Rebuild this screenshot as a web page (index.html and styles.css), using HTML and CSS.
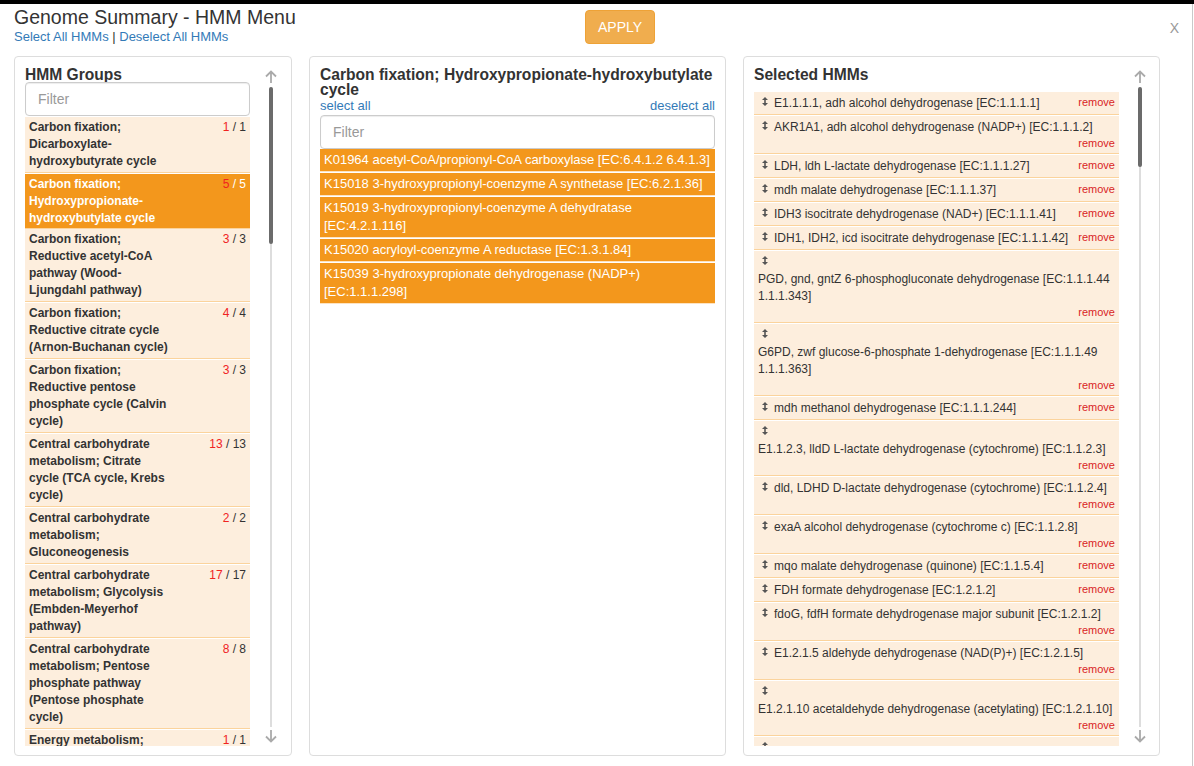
FILE: index.html
```html
<!DOCTYPE html>
<html lang="en">
<head>
<meta charset="utf-8">
<title>Genome Summary - HMM Menu</title>
<link rel="stylesheet" href="styles.css">
</head>
<body>
<div class="modal">
  <header class="modal-head">
    <div class="title-block">
      <h1 class="title">Genome Summary - HMM Menu</h1>
      <div class="bulk-links"><a href="#">Select All HMMs</a> | <a href="#">Deselect All HMMs</a></div>
    </div>
    <button class="btn-apply" type="button">APPLY</button>
    <span class="close">X</span>
  </header>

  <div class="columns">
    <section class="panel panel-groups">
      <div class="panel-main">
        <h2 class="panel-title">HMM Groups</h2>
        <input class="filter" type="text" placeholder="Filter">
        <div class="group-list">
          <div class="group">
            <div class="group-name">Carbon fixation; Dicarboxylate-hydroxybutyrate cycle</div>
            <div class="group-count"><span class="count-hit">1</span> / 1</div>
          </div>
          <div class="group is-active">
            <div class="group-name">Carbon fixation; Hydroxypropionate-hydroxybutylate cycle</div>
            <div class="group-count"><span class="count-hit">5</span> / 5</div>
          </div>
          <div class="group">
            <div class="group-name">Carbon fixation; Reductive acetyl-CoA pathway (Wood-Ljungdahl pathway)</div>
            <div class="group-count"><span class="count-hit">3</span> / 3</div>
          </div>
          <div class="group">
            <div class="group-name">Carbon fixation; Reductive citrate cycle (Arnon-Buchanan cycle)</div>
            <div class="group-count"><span class="count-hit">4</span> / 4</div>
          </div>
          <div class="group">
            <div class="group-name">Carbon fixation; Reductive pentose phosphate cycle (Calvin cycle)</div>
            <div class="group-count"><span class="count-hit">3</span> / 3</div>
          </div>
          <div class="group">
            <div class="group-name">Central carbohydrate metabolism; Citrate cycle (TCA cycle, Krebs cycle)</div>
            <div class="group-count"><span class="count-hit">13</span> / 13</div>
          </div>
          <div class="group">
            <div class="group-name">Central carbohydrate metabolism; Gluconeogenesis</div>
            <div class="group-count"><span class="count-hit">2</span> / 2</div>
          </div>
          <div class="group">
            <div class="group-name">Central carbohydrate metabolism; Glycolysis (Embden-Meyerhof pathway)</div>
            <div class="group-count"><span class="count-hit">17</span> / 17</div>
          </div>
          <div class="group">
            <div class="group-name">Central carbohydrate metabolism; Pentose phosphate pathway (Pentose phosphate cycle)</div>
            <div class="group-count"><span class="count-hit">8</span> / 8</div>
          </div>
          <div class="group">
            <div class="group-name">Energy metabolism; Nitrogen metabolism</div>
            <div class="group-count"><span class="count-hit">1</span> / 1</div>
          </div>
        </div>
      </div>
      <div class="scroll">
        <svg class="scroll-arrow" width="12" height="13" viewBox="0 0 12 13"><path d="M6 1.5V13M1 6.5L6 1.5L11 6.5" fill="none" stroke="#aaa" stroke-width="1.8"/></svg>
        <div class="scroll-track"><div class="scroll-thumb" style="height:157px"></div></div>
        <svg class="scroll-arrow" width="12" height="13" viewBox="0 0 12 13"><path d="M6 0V11.5M1 6.5L6 11.5L11 6.5" fill="none" stroke="#aaa" stroke-width="1.8"/></svg>
      </div>
    </section>

    <section class="panel panel-hmms">
      <div class="panel-main">
        <h2 class="panel-title">Carbon fixation; Hydroxypropionate-hydroxybutylate cycle</h2>
        <div class="select-links"><a href="#">select all</a><a href="#">deselect all</a></div>
        <input class="filter" type="text" placeholder="Filter">
        <div class="hmm-list">
          <div class="hmm">K01964 acetyl-CoA/propionyl-CoA carboxylase [EC:6.4.1.2 6.4.1.3]</div>
          <div class="hmm">K15018 3-hydroxypropionyl-coenzyme A synthetase [EC:6.2.1.36]</div>
          <div class="hmm">K15019 3-hydroxypropionyl-coenzyme A dehydratase [EC:4.2.1.116]</div>
          <div class="hmm">K15020 acryloyl-coenzyme A reductase [EC:1.3.1.84]</div>
          <div class="hmm">K15039 3-hydroxypropionate dehydrogenase (NADP+) [EC:1.1.1.298]</div>
        </div>
      </div>
    </section>

    <section class="panel panel-selected">
      <div class="panel-main">
        <h2 class="panel-title selected-title">Selected HMMs</h2>
        <div class="sel-list">
          <div class="sel-item"><a class="remove" href="#">remove</a><span class="grip"><svg width="6" height="9" viewBox="0 0 6 9"><path d="M3 0L6 3H3.8V6H6L3 9L0 6H2.2V3H0Z" fill="#555"/></svg></span><span class="sel-name">E1.1.1.1, adh alcohol dehydrogenase [EC:1.1.1.1]</span></div>
          <div class="sel-item"><span class="grip"><svg width="6" height="9" viewBox="0 0 6 9"><path d="M3 0L6 3H3.8V6H6L3 9L0 6H2.2V3H0Z" fill="#555"/></svg></span><span class="sel-name">AKR1A1, adh alcohol dehydrogenase (NADP+) [EC:1.1.1.2]</span><div class="remove-row"><a class="remove" href="#">remove</a></div></div>
          <div class="sel-item"><a class="remove" href="#">remove</a><span class="grip"><svg width="6" height="9" viewBox="0 0 6 9"><path d="M3 0L6 3H3.8V6H6L3 9L0 6H2.2V3H0Z" fill="#555"/></svg></span><span class="sel-name">LDH, ldh L-lactate dehydrogenase [EC:1.1.1.27]</span></div>
          <div class="sel-item"><a class="remove" href="#">remove</a><span class="grip"><svg width="6" height="9" viewBox="0 0 6 9"><path d="M3 0L6 3H3.8V6H6L3 9L0 6H2.2V3H0Z" fill="#555"/></svg></span><span class="sel-name">mdh malate dehydrogenase [EC:1.1.1.37]</span></div>
          <div class="sel-item"><a class="remove" href="#">remove</a><span class="grip"><svg width="6" height="9" viewBox="0 0 6 9"><path d="M3 0L6 3H3.8V6H6L3 9L0 6H2.2V3H0Z" fill="#555"/></svg></span><span class="sel-name">IDH3 isocitrate dehydrogenase (NAD+) [EC:1.1.1.41]</span></div>
          <div class="sel-item"><a class="remove" href="#">remove</a><span class="grip"><svg width="6" height="9" viewBox="0 0 6 9"><path d="M3 0L6 3H3.8V6H6L3 9L0 6H2.2V3H0Z" fill="#555"/></svg></span><span class="sel-name">IDH1, IDH2, icd isocitrate dehydrogenase [EC:1.1.1.42]</span></div>
          <div class="sel-item"><span class="grip"><svg width="6" height="9" viewBox="0 0 6 9"><path d="M3 0L6 3H3.8V6H6L3 9L0 6H2.2V3H0Z" fill="#555"/></svg></span><span class="sel-name">PGD, gnd, gntZ 6-phosphogluconate dehydrogenase [EC:1.1.1.44 1.1.1.343]</span><div class="remove-row"><a class="remove" href="#">remove</a></div></div>
          <div class="sel-item"><span class="grip"><svg width="6" height="9" viewBox="0 0 6 9"><path d="M3 0L6 3H3.8V6H6L3 9L0 6H2.2V3H0Z" fill="#555"/></svg></span><span class="sel-name">G6PD, zwf glucose-6-phosphate 1-dehydrogenase [EC:1.1.1.49 1.1.1.363]</span><div class="remove-row"><a class="remove" href="#">remove</a></div></div>
          <div class="sel-item"><a class="remove" href="#">remove</a><span class="grip"><svg width="6" height="9" viewBox="0 0 6 9"><path d="M3 0L6 3H3.8V6H6L3 9L0 6H2.2V3H0Z" fill="#555"/></svg></span><span class="sel-name">mdh methanol dehydrogenase [EC:1.1.1.244]</span></div>
          <div class="sel-item"><span class="grip"><svg width="6" height="9" viewBox="0 0 6 9"><path d="M3 0L6 3H3.8V6H6L3 9L0 6H2.2V3H0Z" fill="#555"/></svg></span><span class="sel-name">E1.1.2.3, lldD L-lactate dehydrogenase (cytochrome) [EC:1.1.2.3]</span><div class="remove-row"><a class="remove" href="#">remove</a></div></div>
          <div class="sel-item"><span class="grip"><svg width="6" height="9" viewBox="0 0 6 9"><path d="M3 0L6 3H3.8V6H6L3 9L0 6H2.2V3H0Z" fill="#555"/></svg></span><span class="sel-name">dld, LDHD D-lactate dehydrogenase (cytochrome) [EC:1.1.2.4]</span><div class="remove-row"><a class="remove" href="#">remove</a></div></div>
          <div class="sel-item"><span class="grip"><svg width="6" height="9" viewBox="0 0 6 9"><path d="M3 0L6 3H3.8V6H6L3 9L0 6H2.2V3H0Z" fill="#555"/></svg></span><span class="sel-name">exaA alcohol dehydrogenase (cytochrome c) [EC:1.1.2.8]</span><div class="remove-row"><a class="remove" href="#">remove</a></div></div>
          <div class="sel-item"><a class="remove" href="#">remove</a><span class="grip"><svg width="6" height="9" viewBox="0 0 6 9"><path d="M3 0L6 3H3.8V6H6L3 9L0 6H2.2V3H0Z" fill="#555"/></svg></span><span class="sel-name">mqo malate dehydrogenase (quinone) [EC:1.1.5.4]</span></div>
          <div class="sel-item"><a class="remove" href="#">remove</a><span class="grip"><svg width="6" height="9" viewBox="0 0 6 9"><path d="M3 0L6 3H3.8V6H6L3 9L0 6H2.2V3H0Z" fill="#555"/></svg></span><span class="sel-name">FDH formate dehydrogenase [EC:1.2.1.2]</span></div>
          <div class="sel-item"><span class="grip"><svg width="6" height="9" viewBox="0 0 6 9"><path d="M3 0L6 3H3.8V6H6L3 9L0 6H2.2V3H0Z" fill="#555"/></svg></span><span class="sel-name">fdoG, fdfH formate dehydrogenase major subunit [EC:1.2.1.2]</span><div class="remove-row"><a class="remove" href="#">remove</a></div></div>
          <div class="sel-item"><span class="grip"><svg width="6" height="9" viewBox="0 0 6 9"><path d="M3 0L6 3H3.8V6H6L3 9L0 6H2.2V3H0Z" fill="#555"/></svg></span><span class="sel-name">E1.2.1.5 aldehyde dehydrogenase (NAD(P)+) [EC:1.2.1.5]</span><div class="remove-row"><a class="remove" href="#">remove</a></div></div>
          <div class="sel-item"><span class="grip"><svg width="6" height="9" viewBox="0 0 6 9"><path d="M3 0L6 3H3.8V6H6L3 9L0 6H2.2V3H0Z" fill="#555"/></svg></span><span class="sel-name">E1.2.1.10 acetaldehyde dehydrogenase (acetylating) [EC:1.2.1.10]</span><div class="remove-row"><a class="remove" href="#">remove</a></div></div>
          <div class="sel-item"><span class="grip"><svg width="6" height="9" viewBox="0 0 6 9"><path d="M3 0L6 3H3.8V6H6L3 9L0 6H2.2V3H0Z" fill="#555"/></svg></span><span class="sel-name">ALDH7A1 aldehyde dehydrogenase family 7 member A1 [EC:1.2.1.31 1.2.1.8 1.2.1.3]</span><div class="remove-row"><a class="remove" href="#">remove</a></div></div>
        </div>
      </div>
      <div class="scroll">
        <svg class="scroll-arrow" width="12" height="13" viewBox="0 0 12 13"><path d="M6 1.5V13M1 6.5L6 1.5L11 6.5" fill="none" stroke="#aaa" stroke-width="1.8"/></svg>
        <div class="scroll-track"><div class="scroll-thumb" style="height:80px"></div></div>
        <svg class="scroll-arrow" width="12" height="13" viewBox="0 0 12 13"><path d="M6 0V11.5M1 6.5L6 11.5L11 6.5" fill="none" stroke="#aaa" stroke-width="1.8"/></svg>
      </div>
    </section>
  </div>
</div>
</body>
</html>
```

FILE: styles.css
```css
* {
  box-sizing: border-box;
}

html, body {
  height: 100%;
}

body {
  margin: 0;
  border-top: 4px solid #000;
  background: #fff;
  color: #333;
  font-family: "Liberation Sans", Arial, Helvetica, sans-serif;
  font-size: 13px;
  line-height: 1.42857;
  overflow: hidden;
}

a {
  color: #337ab7;
  text-decoration: none;
}

.modal {
  width: 1193px;
  height: 762px;
  border-right: 1px solid #c9c9c9;
}

/* header */
.modal-head {
  display: flex;
  align-items: flex-start;
  height: 52px;
  padding: 3px 13px 0 14px;
}

.title-block {
  width: 571px;
  flex: none;
}

.title {
  margin: 0;
  font-size: 19.5px;
  font-weight: normal;
  line-height: 21px;
  color: #333;
}

.bulk-links {
  font-size: 13px;
  line-height: 18px;
}

.btn-apply {
  margin-top: 3px;
  padding: 6px 12px;
  font-family: inherit;
  font-size: 14px;
  line-height: 20px;
  color: #fff;
  background: #f0ad4e;
  border: 1px solid #eea236;
  border-radius: 4px;
}

.close {
  margin-left: auto;
  margin-top: 13px;
  font-size: 14px;
  line-height: 17px;
  color: #999;
}

/* columns */
.columns {
  display: flex;
  gap: 17px;
  padding-left: 14px;
}

.panel {
  display: flex;
  height: 700px;
  border: 1px solid #ddd;
  border-radius: 4px;
  padding: 10px 12px 9px 10px;
}

.panel-groups {
  width: 278px;
  padding-right: 13px;
}

.panel-hmms {
  width: 417px;
  padding-right: 10px;
}

.panel-selected {
  width: 417px;
}

.panel-main {
  flex: 1;
  min-width: 0;
  display: flex;
  flex-direction: column;
}

.panel-title {
  margin: 0;
  font-size: 15.6px;
  line-height: 15px;
  font-weight: bold;
  color: #333;
}

.selected-title {
  margin-bottom: 10px;
}

.filter {
  flex: none;
  width: 100%;
  height: 34px;
  padding: 6px 12px;
  font-family: inherit;
  font-size: 14px;
  line-height: 20px;
  color: #555;
  border: 1px solid #ccc;
  border-radius: 4px;
  box-shadow: inset 0 1px 1px rgba(0, 0, 0, 0.075);
  outline: none;
}

.filter::placeholder {
  color: #999;
}

/* scroll indicator */
.scroll {
  width: 14px;
  margin-left: 14px;
  flex: none;
  display: flex;
  flex-direction: column;
  align-items: center;
  padding: 3px 0;
}

.scroll-arrow {
  display: block;
  flex: none;
}

.scroll-track {
  flex: 1;
  width: 4px;
  margin: 4px 0 3px;
  background: linear-gradient(#ddd, #ddd) center / 2px 100% no-repeat;
}

.scroll-thumb {
  width: 4px;
  background: #6b6b6b;
  border-radius: 2px;
}

/* HMM groups */
.group-list {
  flex: 1;
  min-height: 0;
  overflow: hidden;
  padding-top: 1px;
}

.group {
  display: flex;
  padding: 2px 4px;
  margin-bottom: 1px;
  background: #fdeedd;
  border-bottom: 1px solid #fbd39c;
  font-size: 12px;
  line-height: 17px;
}

.group-name {
  width: 141px;
  font-weight: bold;
}

.group-count {
  margin-left: auto;
}

.count-hit {
  color: #f0231f;
}

.group.is-active {
  margin-bottom: 0;
  padding-bottom: 1px;
  background: #f3971c;
  color: #fff;
}

/* HMMs of the group */
.select-links {
  display: flex;
  justify-content: space-between;
  font-size: 13px;
  line-height: 18px;
}

.hmm {
  padding: 2px 4px;
  margin-bottom: 1px;
  background: #f3971c;
  border-bottom: 1px solid #fde3c2;
  color: #fff;
  font-size: 13px;
  line-height: 18px;
}

/* selected HMMs */
.sel-list {
  flex: 1;
  min-height: 0;
  overflow: hidden;
}

.sel-item {
  display: flow-root;
  padding: 3px 4px 2px;
  margin-bottom: 1px;
  background: #fdeedd;
  border-bottom: 1px solid #fbd39c;
  font-size: 12px;
  line-height: 17px;
  color: #333;
}

.grip {
  display: inline-block;
  width: 16px;
  padding-left: 4px;
}

.grip svg {
  display: inline-block;
  vertical-align: 1px;
}

.sel-name {
  display: inline-block;
  vertical-align: top;
}

.remove {
  float: right;
  font-size: 11px;
  line-height: 15px;
  color: #d9241f;
}

.remove-row {
  text-align: right;
  line-height: 15px;
}

.remove-row .remove {
  float: none;
}
```
